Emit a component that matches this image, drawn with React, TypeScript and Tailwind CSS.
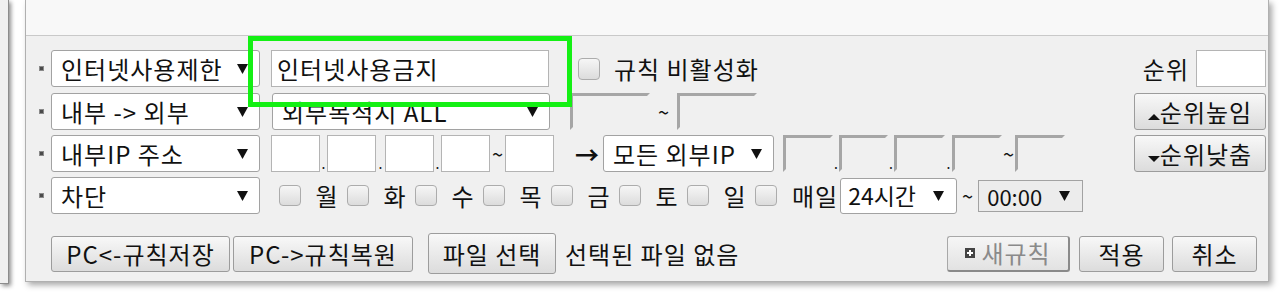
import type { ReactNode } from 'react';

function Arrow() {
  return (
    <svg width="11" height="10" viewBox="0 0 11 10" className="shrink-0">
      <path d="M0 0H11L5.5 10Z" fill="#111" />
    </svg>
  );
}

function Select({ label, className }: { label: string; className: string }) {
  return (
    <div className={`flex shrink-0 items-center justify-between rounded-[3px] border border-[#a2a2a2] bg-white pl-[9px] pr-[11px] ${className}`}>
      <span className="whitespace-pre">{label}</span>
      <Arrow />
    </div>
  );
}

function Bullet() {
  return <div className="mr-[7px] h-[5px] w-[5px] shrink-0 border border-[#8a8a8a] bg-[#4a4a4a]" />;
}

function Box({ className }: { className: string }) {
  return <div className={`shrink-0 border border-[#b4b4b4] bg-white ${className}`} />;
}

function Inset({ className }: { className: string }) {
  return (
    <div
      className={`shrink-0 border-[3px] border-t-[#a6a6a6] border-l-[#a6a6a6] border-r-[#f0f0f0] border-b-[#f0f0f0] ${className}`}
    />
  );
}

function Check({ className }: { className: string }) {
  return (
    <div className={`shrink-0 rounded-[4px] border border-[#acacac] bg-linear-to-b from-[#f6f6f6] to-[#dcdcdc] ${className}`} />
  );
}

function Btn({ children, className }: { children: ReactNode; className: string }) {
  return (
    <div
      className={`flex shrink-0 items-center justify-center rounded-[3px] border border-[#9c9c9c] bg-linear-to-b from-[#f8f8f8] to-[#dcdcdc] ${className}`}
    >
      {children}
    </div>
  );
}

function Dot({ className }: { className: string }) {
  return <span className={`shrink-0 self-end pb-[2px] text-center text-[14px] leading-[14px] tracking-normal ${className}`}>.</span>;
}

const days = ['월', '화', '수', '목', '금', '토', '일'];

export default function App() {
  return (
    <div className="relative flex h-[305px] w-[1280px] overflow-hidden bg-white font-['Noto_Sans_CJK_KR','Noto_Sans',sans-serif] text-[24px] tracking-[1px] text-[#111]">
      <div className="h-[284px] w-[9px] shrink-0 border-r border-b border-[#8c8c8c] bg-[#f0f0f0] shadow-[2px_2px_4px_rgba(0,0,0,0.45)]" />

      <div className="ml-[16px] flex h-[282px] w-[1244px] shrink-0 flex-col border-x border-b border-[#b0b0b0] shadow-[3px_3px_6px_rgba(0,0,0,0.35)]">
        <div className="h-[36px] shrink-0 border-b border-[#c9c9c9] bg-[#f8f8f8]" />

        <div className="flex flex-1 flex-col bg-[#f0f0f0] pl-[13px] pr-[2px] pt-[14px] leading-none">
          {/* row 1 */}
          <div className="flex h-[37px] items-center">
            <Bullet />
            <Select label="인터넷사용제한" className="h-full w-[209px]" />
            <div className="ml-[11px] flex h-full w-[278px] shrink-0 items-center border border-[#b4b4b4] bg-white pl-[5px]">
              인터넷사용금지
            </div>
            <Check className="ml-[29px] h-[22px] w-[22px]" />
            <span className="ml-[14px]">규칙 비활성화</span>
            <span className="ml-auto">순위</span>
            <Box className="ml-[7px] h-full w-[70px]" />
          </div>

          {/* row 2 */}
          <div className="mt-[6px] flex h-[37px] items-center">
            <Bullet />
            <Select label="내부 -> 외부" className="h-full w-[209px]" />
            <Select label="외부목적지 ALL" className="ml-[12px] h-full w-[278px]" />
            <Inset className="ml-[20px] h-full w-[80px]" />
            <span className="w-[27px] shrink-0 text-center text-[20px] tracking-normal">~</span>
            <Inset className="h-full w-[80px]" />
            <Btn className="ml-auto h-full w-[132px]">
              <svg width="12" height="6" viewBox="0 0 12 6" className="mt-[10px]">
                <path d="M0 6H12L6 0Z" fill="#111" />
              </svg>
              순위높임
            </Btn>
          </div>

          {/* row 3 */}
          <div className="mt-[5px] flex h-[37px] items-center">
            <Bullet />
            <Select label="내부IP 주소" className="h-full w-[209px]" />
            <Box className="ml-[11px] h-full w-[49px]" />
            <Dot className="w-[7px]" />
            <Box className="h-full w-[49px]" />
            <Dot className="w-[9px]" />
            <Box className="h-full w-[49px]" />
            <Dot className="w-[7px]" />
            <Box className="h-full w-[49px]" />
            <span className="w-[15px] shrink-0 text-center text-[20px] tracking-normal">~</span>
            <Box className="h-full w-[49px]" />
            <span className="ml-[21px] w-[22px] shrink-0 text-center font-bold tracking-normal">→</span>
            <Select label="모든 외부IP" className="ml-[6px] h-full w-[171px]" />
            <Inset className="ml-[9px] h-full w-[50px]" />
            <Dot className="w-[6px]" />
            <Inset className="h-full w-[49px]" />
            <Dot className="w-[6px]" />
            <Inset className="h-full w-[51px]" />
            <Dot className="w-[7px]" />
            <Inset className="h-full w-[50px]" />
            <span className="w-[13px] shrink-0 text-center text-[20px] tracking-normal">~</span>
            <Inset className="h-full w-[50px]" />
            <Btn className="ml-auto h-full w-[132px]">
              <svg width="12" height="6" viewBox="0 0 12 6" className="mt-[10px]">
                <path d="M0 0H12L6 6Z" fill="#111" />
              </svg>
              순위낮춤
            </Btn>
          </div>

          {/* row 4 */}
          <div className="mt-[5px] flex h-[37px] items-center">
            <Bullet />
            <Select label="차단" className="h-full w-[209px]" />
            <div className="ml-[19px] flex items-center">
              {days.map((d) => (
                <div key={d} className="flex items-center">
                  <Check className="h-[21px] w-[22px]" />
                  <span className="ml-[14px] mr-[8px] w-[24px] text-center">{d}</span>
                </div>
              ))}
              <Check className="h-[21px] w-[22px]" />
              <span className="ml-[15px]">매일</span>
            </div>
            <div className="ml-[2px] flex h-[36px] w-[117px] shrink-0 items-center justify-between rounded-[3px] border border-[#a2a2a2] bg-white pl-[7px] pr-[12px] text-[23px] tracking-normal">
              <span>24시간</span>
              <Arrow />
            </div>
            <span className="w-[21px] shrink-0 text-center text-[20px] tracking-normal">~</span>
            <div className="flex h-[32px] w-[105px] shrink-0 items-center justify-between border border-[#a2a2a2] bg-[#ececec] pl-[8px] pr-[12px] text-[22px] tracking-normal">
              <span>00:00</span>
              <Arrow />
            </div>
          </div>

          {/* bottom row */}
          <div className="mt-[19px] flex h-[41px] items-center pr-[9px]">
            <Btn className="ml-[12px] h-[36px] w-[179px]">PC&lt;-규칙저장</Btn>
            <Btn className="ml-[3px] h-[36px] w-[180px]">PC-&gt;규칙복원</Btn>
            <Btn className="ml-[15px] h-[41px] w-[128px]">파일 선택</Btn>
            <span className="ml-[9px]">선택된 파일 없음</span>
            <div className="ml-auto flex h-[36px] w-[123px] shrink-0 items-center justify-center gap-[6px] rounded-[3px] border border-[#a8a8a8] border-r-2 border-b-2 border-r-[#8a8a8a] border-b-[#8a8a8a] bg-linear-to-b from-[#f6f6f6] to-[#e2e2e2] text-[#8a8a8a]">
              <span className="relative flex h-[10px] w-[10px] shrink-0 items-center justify-center bg-[#444]">
                <span className="absolute h-[2px] w-[6px] bg-white" />
                <span className="absolute h-[6px] w-[2px] bg-white" />
              </span>
              새규칙
            </div>
            <Btn className="ml-[9px] h-[36px] w-[85px]">적용</Btn>
            <Btn className="ml-[8px] h-[36px] w-[85px]">취소</Btn>
          </div>
        </div>
      </div>

      <div className="absolute left-[248px] top-[36px] h-[71px] w-[324px] border-[5px] border-[#14f014]" />
    </div>
  );
}
